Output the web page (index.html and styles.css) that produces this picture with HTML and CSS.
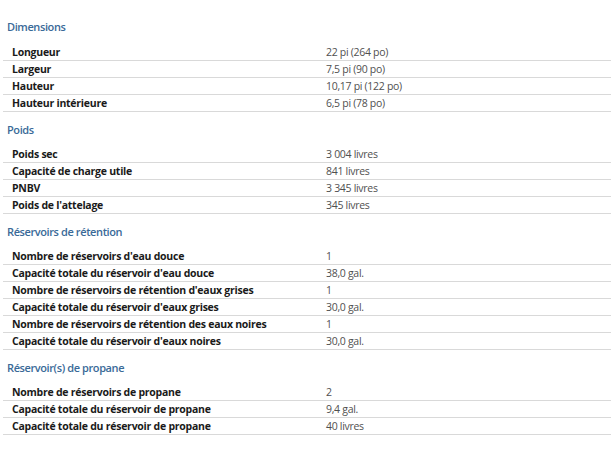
FILE: index.html
```html
<!DOCTYPE html>
<html lang="fr">
<head>
<meta charset="utf-8">
<title>Spécifications</title>
<link rel="stylesheet" href="styles.css">
</head>
<body>
<div class="specs">
  <section class="group">
    <h3 class="group-title">Dimensions</h3>
    <div class="rows">
      <div class="row"><span class="label">Longueur</span><span class="value">22 pi (264 po)</span></div>
      <div class="row"><span class="label">Largeur</span><span class="value">7,5 pi (90 po)</span></div>
      <div class="row"><span class="label">Hauteur</span><span class="value">10,17 pi (122 po)</span></div>
      <div class="row"><span class="label">Hauteur intérieure</span><span class="value">6,5 pi (78 po)</span></div>
    </div>
  </section>
  <section class="group">
    <h3 class="group-title">Poids</h3>
    <div class="rows">
      <div class="row"><span class="label">Poids sec</span><span class="value">3 004 livres</span></div>
      <div class="row"><span class="label">Capacité de charge utile</span><span class="value">841 livres</span></div>
      <div class="row"><span class="label">PNBV</span><span class="value">3 345 livres</span></div>
      <div class="row"><span class="label">Poids de l'attelage</span><span class="value">345 livres</span></div>
    </div>
  </section>
  <section class="group">
    <h3 class="group-title">Réservoirs de rétention</h3>
    <div class="rows">
      <div class="row"><span class="label">Nombre de réservoirs d'eau douce</span><span class="value">1</span></div>
      <div class="row"><span class="label">Capacité totale du réservoir d'eau douce</span><span class="value">38,0 gal.</span></div>
      <div class="row"><span class="label">Nombre de réservoirs de rétention d'eaux grises</span><span class="value">1</span></div>
      <div class="row"><span class="label">Capacité totale du réservoir d'eaux grises</span><span class="value">30,0 gal.</span></div>
      <div class="row"><span class="label">Nombre de réservoirs de rétention des eaux noires</span><span class="value">1</span></div>
      <div class="row"><span class="label">Capacité totale du réservoir d'eaux noires</span><span class="value">30,0 gal.</span></div>
    </div>
  </section>
  <section class="group">
    <h3 class="group-title">Réservoir(s) de propane</h3>
    <div class="rows">
      <div class="row"><span class="label">Nombre de réservoirs de propane</span><span class="value">2</span></div>
      <div class="row"><span class="label">Capacité totale du réservoir de propane</span><span class="value">9,4 gal.</span></div>
      <div class="row"><span class="label">Capacité totale du réservoir de propane</span><span class="value">40 livres</span></div>
    </div>
  </section>
</div>
</body>
</html>
```
FILE: styles.css
```css
html, body {
  margin: 0;
  padding: 0;
  background: #ffffff;
}
body {
  font-family: "Open Sans", "Noto Sans", sans-serif;
  font-size: 11px;
  color: #222;
}
.specs {
  padding: 10px 0 0 3px;
}
.group-title {
  margin: 0;
  padding: 11px 0 9px 4px;
  line-height: 14px;
  font-size: 11px;
  font-weight: 600;
  letter-spacing: -0.4px;
  color: #3a6a98;
}
.group:first-child .group-title {
  padding-top: 10px;
  padding-bottom: 10px;
}
.row {
  display: grid;
  grid-template-columns: 314px 1fr;
  height: 16px;
  line-height: 16px;
  padding-left: 9px;
  border-bottom: 1px solid #d9d9d9;
}
.label {
  font-size: 10.5px;
  font-weight: 700;
  letter-spacing: -0.25px;
  color: #1a1a1a;
  white-space: nowrap;
}
.value {
  font-size: 10.5px;
  font-weight: 400;
  letter-spacing: -0.3px;
  color: #505050;
  white-space: nowrap;
}
```
